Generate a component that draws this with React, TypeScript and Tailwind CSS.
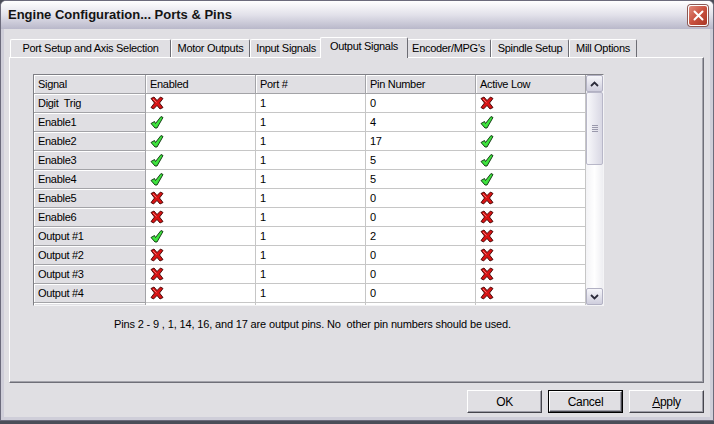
import React from 'react';

type Mark = 'x' | 'v';

interface Row {
  signal: string;
  enabled: Mark;
  port: string;
  pin: string;
  low: Mark;
}

const rows: Row[] = [
  { signal: 'Digit  Trig', enabled: 'x', port: '1', pin: '0', low: 'x' },
  { signal: 'Enable1', enabled: 'v', port: '1', pin: '4', low: 'v' },
  { signal: 'Enable2', enabled: 'v', port: '1', pin: '17', low: 'v' },
  { signal: 'Enable3', enabled: 'v', port: '1', pin: '5', low: 'v' },
  { signal: 'Enable4', enabled: 'v', port: '1', pin: '5', low: 'v' },
  { signal: 'Enable5', enabled: 'x', port: '1', pin: '0', low: 'x' },
  { signal: 'Enable6', enabled: 'x', port: '1', pin: '0', low: 'x' },
  { signal: 'Output #1', enabled: 'v', port: '1', pin: '2', low: 'x' },
  { signal: 'Output #2', enabled: 'x', port: '1', pin: '0', low: 'x' },
  { signal: 'Output #3', enabled: 'x', port: '1', pin: '0', low: 'x' },
  { signal: 'Output #4', enabled: 'x', port: '1', pin: '0', low: 'x' },
  // only the top few pixels of this row are visible
  { signal: '', enabled: 'x', port: '', pin: '', low: 'x' },
];

const tabs = [
  { label: 'Port Setup and Axis Selection', w: 'w-[161px]' },
  { label: 'Motor Outputs', w: 'w-[79px]' },
  { label: 'Input Signals', w: 'w-[72px]' },
  { label: 'Output Signals', w: 'w-[88px]', active: true },
  { label: "Encoder/MPG's", w: 'w-[85px]' },
  { label: 'Spindle Setup', w: 'w-[78px]' },
  { label: 'Mill Options', w: 'w-[68px]' },
];

function RedX() {
  return (
    <svg width="14" height="14" viewBox="0 0 14 14">
      <polygon
        points="1,2.5 4,1 7,4.5 10.5,1 13,2.5 9.5,7 13,11.5 10,13 7,9.5 3.5,13 1,11.5 4.5,7"
        fill="#d81414"
        stroke="#3c0000"
        strokeWidth="0.9"
        strokeLinejoin="round"
      />
      <path d="M3 3 L6.5 6.5" stroke="#ff8a8a" strokeWidth="0.8" />
    </svg>
  );
}

function GreenCheck() {
  return (
    <svg width="14" height="14" viewBox="0 0 14 14">
      <polygon
        points="1,8.5 4.5,6.5 5.5,8.5 11,1.5 13,2.5 7,13 5,13"
        fill="#3ee23e"
        stroke="#0b2e0b"
        strokeWidth="0.9"
        strokeLinejoin="round"
      />
    </svg>
  );
}

function Icon({ m }: { m: Mark }) {
  return m === 'x' ? <RedX /> : <GreenCheck />;
}

function Chevron({ up }: { up?: boolean }) {
  return (
    <svg width="9" height="6" viewBox="0 0 9 6">
      <path
        d={up ? 'M1 5 L4.5 1.5 L8 5' : 'M1 1 L4.5 4.5 L8 1'}
        fill="none"
        stroke="#2b2b3a"
        strokeWidth="1.8"
      />
    </svg>
  );
}

function ScrollBtn({ up }: { up?: boolean }) {
  return (
    <div className="h-[17px] shrink-0 flex items-center justify-center rounded-[2px] border border-[#b2b1c3] bg-gradient-to-b from-[#f6f6fa] to-[#cfcedd]">
      <Chevron up={up} />
    </div>
  );
}

function Scrollbar() {
  return (
    <div className="w-[17px] h-full flex flex-col bg-gradient-to-r from-[#f3f3f6] via-[#ffffff] to-[#eeeef2]">
      <ScrollBtn up />
      <div className="h-[73px] shrink-0 flex flex-col items-center justify-center gap-[1px] rounded-[2px] border border-[#b8b7c8] bg-gradient-to-r from-[#f8f8fb] to-[#d9d8e4]">
        <div className="w-[6px] h-px bg-[#9a99ac]" />
        <div className="w-[6px] h-px bg-[#9a99ac]" />
        <div className="w-[6px] h-px bg-[#9a99ac]" />
        <div className="w-[6px] h-px bg-[#9a99ac]" />
      </div>
      <div className="flex-1" />
      <ScrollBtn />
    </div>
  );
}

const fixedCell =
  'h-[19px] flex items-center pl-[4px] bg-[#e0dfe3] border-r border-b border-[#a3a3a7] shadow-[inset_1px_1px_0_#ffffff]';
const dataCell = 'h-[19px] flex items-center pl-[4px] bg-white border-r border-b border-[#c6c6c6]';

function Grid() {
  return (
    <div className="w-[571px] h-[232px] flex border border-t-[#7f7f85] border-l-[#7f7f85] border-r-[#f4f4f6] border-b-[#f4f4f6] bg-white">
      <div className="w-[552px] h-full overflow-hidden">
        <div className="grid grid-cols-[112px_110px_110px_110px_110px]">
          {['Signal', 'Enabled', 'Port #', 'Pin Number', 'Active Low'].map(h => (
            <div key={h} className={fixedCell}>
              {h}
            </div>
          ))}
          {rows.map((r, i) => (
            <React.Fragment key={i}>
              <div className={`${fixedCell} whitespace-pre`}>{r.signal}</div>
              <div className={dataCell}>
                <Icon m={r.enabled} />
              </div>
              <div className={dataCell}>{r.port}</div>
              <div className={dataCell}>{r.pin}</div>
              <div className={dataCell}>
                <Icon m={r.low} />
              </div>
            </React.Fragment>
          ))}
        </div>
      </div>
      <Scrollbar />
    </div>
  );
}

function Button({ children, primary }: { children: React.ReactNode; primary?: boolean }) {
  return (
    <div className={`w-[75px] h-[23px] text-[12px] tracking-[-0.3px] text-black ${primary ? 'border border-black' : ''}`}>
      <div className="w-full h-full flex items-center justify-center bg-[#e0dfe3] border border-t-white border-l-white border-r-[#45454c] border-b-[#45454c] shadow-[inset_-1px_-1px_0_#9d9da6]">
        {children}
      </div>
    </div>
  );
}

export default function App() {
  return (
    <div className="w-[714px] h-[424px] overflow-hidden bg-[#4a4d58] font-['Liberation_Sans',Arial,sans-serif] text-[11px] tracking-[-0.3px] text-black">
      <div className="w-[714px] h-[421px] flex flex-col rounded-t-[6px] border border-[#6c6b7c] bg-[#e0dfe3] overflow-hidden">
        {/* Title bar */}
        <div className="h-[28px] shrink-0 flex items-center justify-between pl-[7px] pr-[5px] bg-gradient-to-b from-[#ffffff] via-[#e2e1ea] to-[#b9b8ca]">
          <span className="text-[13px] font-bold tracking-normal text-[#141414]">
            Engine Configuration... Ports &amp; Pins
          </span>
          <div className="w-[20px] h-[21px] flex items-center justify-center rounded-[3px] border border-white bg-gradient-to-br from-[#e08a7c] via-[#c9513f] to-[#a93726] shadow-[0_0_0_1px_#8b5a56]">
            <svg width="11" height="11" viewBox="0 0 11 11">
              <path d="M1.5 1.5 L9.5 9.5 M9.5 1.5 L1.5 9.5" stroke="#ffffff" strokeWidth="2" strokeLinecap="round" />
            </svg>
          </div>
        </div>

        {/* Client */}
        <div className="flex-1 flex flex-col border-x-[3px] border-b-[3px] border-x-[#cfced9] border-b-[#cfced9] pt-[8px] pl-[5px] pr-[6px] pb-[4px]">
          {/* Tabs */}
          <div className="h-[20px] shrink-0 flex items-end pl-[1px]">
            {tabs.map(t => (
              <div
                key={t.label}
                className={`${t.w} shrink-0 flex items-center justify-center rounded-t-[2px] border-t border-l border-r border-t-white border-l-white border-r-[#6d6d74] bg-[#e0dfe3] whitespace-nowrap ${
                  t.active ? 'h-[21px] -mx-[2px] -mb-px relative z-10 pb-[3px]' : 'h-[18px]'
                }`}
              >
                {t.label}
              </div>
            ))}
          </div>

          {/* Panel */}
          <div className="h-[326px] shrink-0 border border-t-white border-l-white border-r-[#6f6f78] border-b-[#6f6f78] shadow-[inset_-1px_-1px_0_#a3a3ab]">
            <div className="pl-[23px] pt-[16px]">
              <Grid />
            </div>
            <div className="pl-[104px] pt-[10px] whitespace-pre tracking-[-0.15px]">
              Pins 2 - 9 , 1, 14, 16, and 17 are output pins. No  other pin numbers should be used.
            </div>
          </div>

          {/* Buttons */}
          <div className="mt-[7px] flex justify-end gap-[6px]">
            <Button>OK</Button>
            <Button primary>Cancel</Button>
            <Button>
              <span>
                <span className="underline">A</span>pply
              </span>
            </Button>
          </div>
        </div>
      </div>
    </div>
  );
}
